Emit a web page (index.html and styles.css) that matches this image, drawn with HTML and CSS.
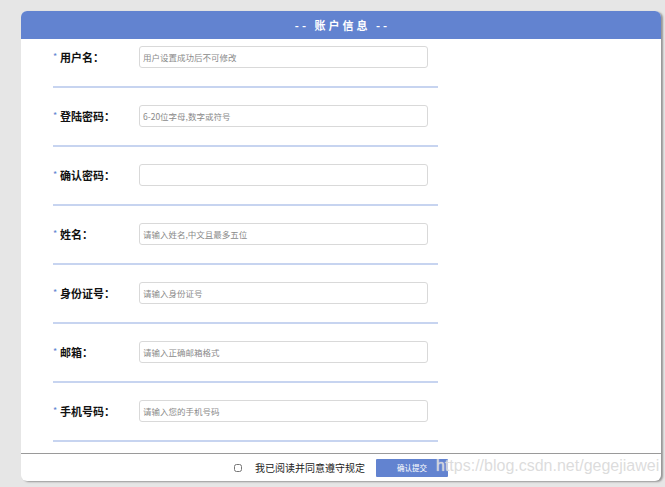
FILE: index.html
```html
<!DOCTYPE html>
<html lang="zh">
<head>
<meta charset="utf-8">
<title>账户信息</title>
<link rel="stylesheet" href="styles.css">
</head>
<body>
<div class="card">
  <div class="header">-- 账户信息 --</div>
  <div class="form">
    <div class="field">
      <div class="row"><label class="label"><span class="req">*</span>用户名：</label><input class="input" type="text" placeholder="用户设置成功后不可修改"></div>
      <div class="sep"></div>
    </div>
    <div class="field">
      <div class="row"><label class="label"><span class="req">*</span>登陆密码：</label><input class="input" type="password" placeholder="6-20位字母,数字或符号"></div>
      <div class="sep"></div>
    </div>
    <div class="field">
      <div class="row"><label class="label"><span class="req">*</span>确认密码：</label><input class="input" type="password"></div>
      <div class="sep"></div>
    </div>
    <div class="field">
      <div class="row"><label class="label"><span class="req">*</span>姓名：</label><input class="input" type="text" placeholder="请输入姓名,中文且最多五位"></div>
      <div class="sep"></div>
    </div>
    <div class="field">
      <div class="row"><label class="label"><span class="req">*</span>身份证号：</label><input class="input" type="text" placeholder="请输入身份证号"></div>
      <div class="sep"></div>
    </div>
    <div class="field">
      <div class="row"><label class="label"><span class="req">*</span>邮箱：</label><input class="input" type="text" placeholder="请输入正确邮箱格式"></div>
      <div class="sep"></div>
    </div>
    <div class="field">
      <div class="row"><label class="label"><span class="req">*</span>手机号码：</label><input class="input" type="text" placeholder="请输入您的手机号码"></div>
      <div class="sep"></div>
    </div>
  </div>
  <div class="footer">
    <input class="check" type="checkbox">
    <span class="agree">我已阅读并同意遵守规定</span>
    <button class="submit" type="button">确认提交</button>
  </div>
</div>
<div class="watermark">https://blog.csdn.net/gegejiawei</div>
</body>
</html>
```
FILE: styles.css
```css
html, body {
  margin: 0;
  padding: 0;
}
body {
  background: #e6e6e6;
  font-family: "Noto Sans CJK SC", "Liberation Sans", sans-serif;
  width: 665px;
  height: 487px;
  overflow: hidden;
  position: relative;
}
.card {
  margin: 11px 0 0 21px;
  width: 640px;
  background: #fff;
  border-radius: 6px;
  box-shadow: 2px 1px 2px rgba(0, 0, 0, 0.35);
}
.header {
  height: 28px;
  background: #6283d0;
  border-radius: 6px 6px 0 0;
  color: #fff;
  font-size: 11px;
  font-weight: bold;
  letter-spacing: 3px;
  text-indent: 3px;
  line-height: 28px;
  text-align: center;
  white-space: pre;
}
.form {
  display: flex;
  flex-direction: column;
  gap: 17px;
  padding: 7px 0 11px 32px;
}
.field {
  display: flex;
  flex-direction: column;
  gap: 18px;
}
.row {
  display: flex;
  align-items: center;
  height: 22px;
}
.label {
  width: 86px;
  font-size: 11px;
  font-weight: bold;
  color: #111;
  display: flex;
  align-items: center;
}
.req {
  color: #6283d0;
  font-size: 9px;
  font-weight: normal;
  width: 7px;
  margin-top: -2px;
}
.input {
  box-sizing: border-box;
  width: 289px;
  height: 22px;
  border: 1px solid #d9d9d9;
  border-radius: 3px;
  padding: 0 3px;
  margin: 0;
  font-family: "Noto Sans CJK SC", "Liberation Sans", sans-serif;
  font-size: 8.5px;
  color: #333;
  outline: none;
}
.input::placeholder {
  color: #8a8a8a;
}
.sep {
  width: 385px;
  height: 2px;
  background: #c7d4f0;
}
.footer {
  border-top: 1px solid #9a9a9a;
  height: 27px;
  display: flex;
  align-items: center;
  justify-content: center;
}
.check {
  width: 8px;
  height: 8px;
  margin: 0 13px 0 0;
}
.agree {
  font-size: 10px;
  color: #222;
  margin-right: 11px;
}
.submit {
  width: 72px;
  height: 18px;
  border: none;
  border-radius: 1px;
  background: #6283d0;
  color: #fff;
  font-family: "Noto Sans CJK SC", "Liberation Sans", sans-serif;
  font-size: 7.5px;
  padding: 0;
  margin: 0;
}
.watermark {
  position: absolute;
  left: 436px;
  top: 457px;
  font-family: "Liberation Sans", Arial, sans-serif;
  font-size: 16px;
  line-height: 18px;
  color: rgba(205, 205, 205, 0.7);
  text-shadow: 0 0 1px #fff;
  white-space: nowrap;
}
```
